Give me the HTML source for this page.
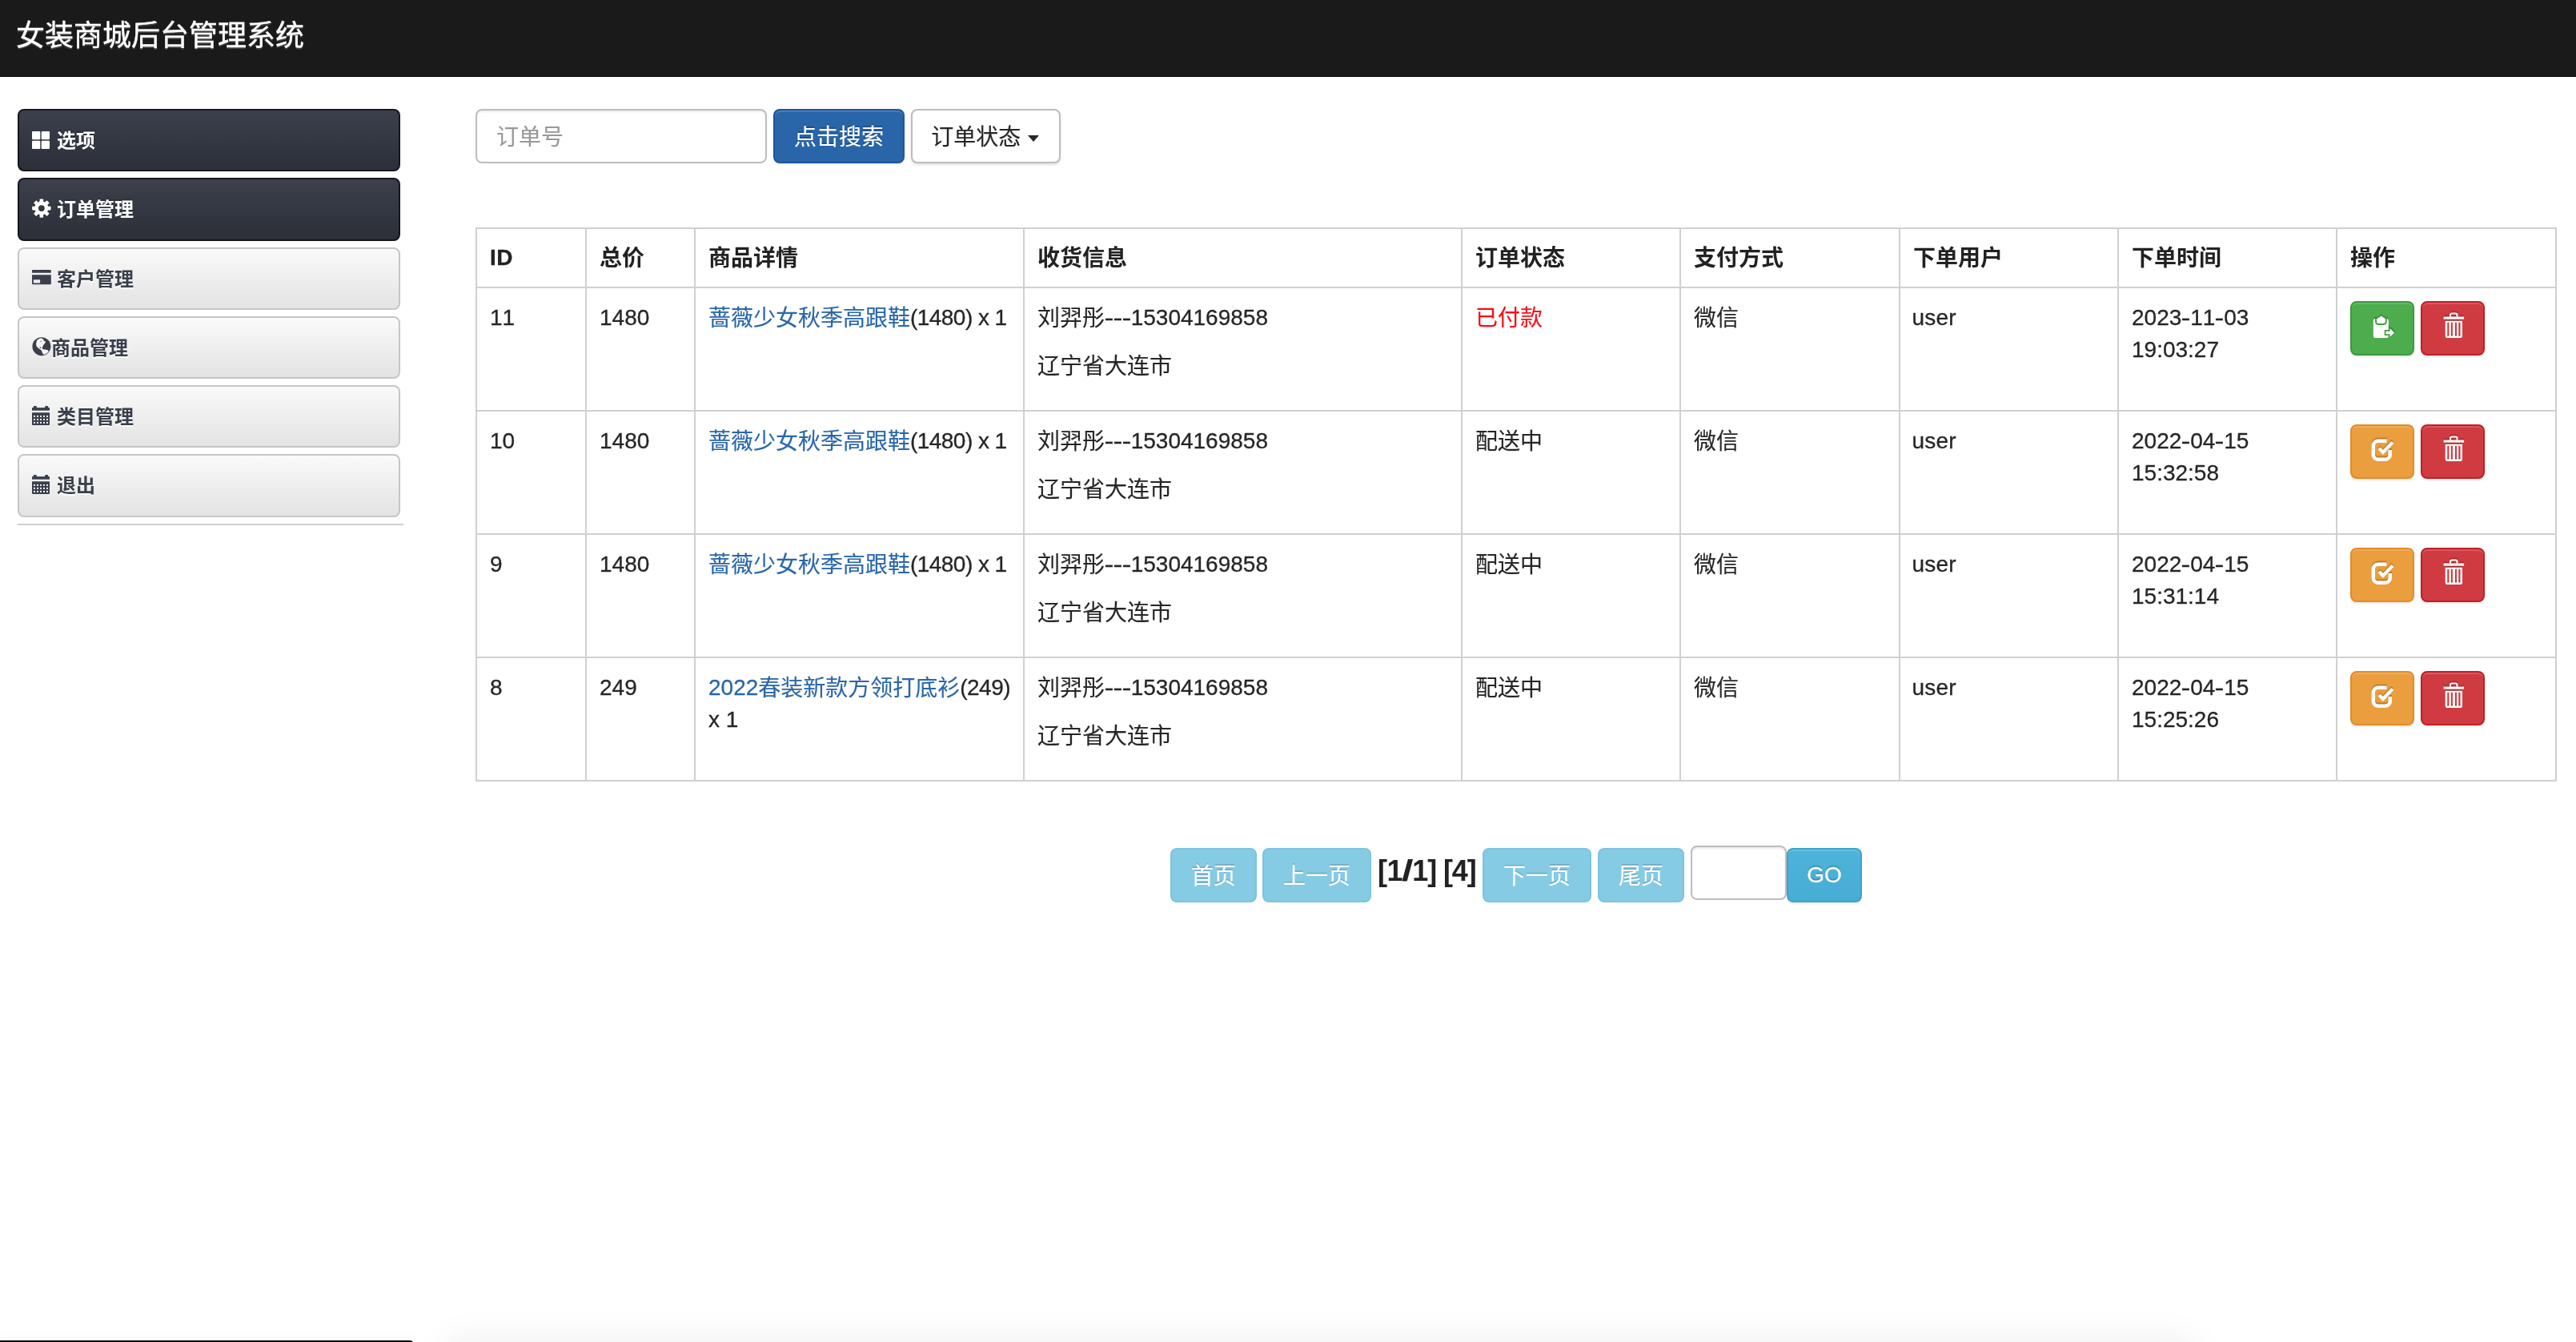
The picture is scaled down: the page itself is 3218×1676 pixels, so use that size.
<!DOCTYPE html>
<html lang="zh-CN">
<head>
<meta charset="utf-8">
<title>女装商城后台管理系统</title>
<style>
*{box-sizing:border-box;}
html,body{margin:0;padding:0;}
body{width:3218px;height:1676px;overflow:hidden;position:relative;background:#fff;
 font-family:"Liberation Sans","Noto Sans CJK SC",sans-serif;font-size:28px;line-height:40px;color:#262626;}
#w{position:absolute;left:0;top:0;width:3218px;height:1676px;will-change:transform;}
a{color:#2a66aa;text-decoration:none;}
p{margin:0 0 20px 0;}
.c{position:relative;top:1px;-webkit-text-stroke:.14px;}
.cb{position:relative;top:1px;}
.h{display:inline-block;width:10.9px;text-align:center;transform:scaleX(1.27);}
.nb{white-space:nowrap;}
.id{-webkit-text-stroke:.3px;letter-spacing:.5px;}

/* navbar */
.nav{position:absolute;left:0;top:0;width:3218px;height:96px;background:#1a1a1a;border-bottom:1px solid #030303;}
.brand{position:absolute;left:20px;top:19px;font-size:36px;line-height:52px;color:#fff;white-space:nowrap;text-shadow:0 2px 1px rgba(255,255,255,.18);-webkit-text-stroke:.4px;}

/* sidebar */
.side{position:absolute;left:22px;top:136px;width:482px;}
.sb{position:relative;display:block;width:478px;margin:0 0 8px 0;padding:21px 16px 19px 47px;border:2px solid #c6c6c6;border-radius:8px;
 font-size:24px;font-weight:bold;line-height:34.28px;color:#3a3f4b;white-space:nowrap;
 background:linear-gradient(to bottom,#fafafa 0%,#e3e3e4 100%);text-shadow:0 2px 0 rgba(255,255,255,.9);}
.sb.dark{color:#fff;border-color:#15171c;background:linear-gradient(to bottom,#3b404c 0%,#2c2f38 100%);text-shadow:0 -2px 0 rgba(0,0,0,.18);}
.sb svg{position:absolute;left:16px;top:24px;}
.sb.nog{padding-left:40px;}
.side hr{margin:0;border:0;border-top:2px solid #d0d0d0;width:482px;height:0;}

/* search row */
.search{position:absolute;left:594px;top:136px;white-space:nowrap;font-size:0;}
.inp{display:inline-block;vertical-align:top;width:364px;height:68px;border:2px solid #bdbdbd;border-radius:8px;padding:14px 24px 10px 24px;
 font-size:28px;line-height:40px;color:#999;background:#fff;-webkit-text-stroke:.14px;box-shadow:inset 0 2px 2px rgba(0,0,0,.075);}
.btn{display:inline-block;vertical-align:top;height:68px;padding:14px 0 10px 0;border:2px solid transparent;border-radius:8px;font-size:28px;line-height:40px;white-space:nowrap;text-align:center;-webkit-text-stroke:.14px;}
.btn-primary{margin-left:8px;width:164px;color:#fff;background:#2965a9;border-color:#21569a;
 text-shadow:0 -2px 0 rgba(0,0,0,.2);box-shadow:inset 0 2px 0 rgba(255,255,255,.15),0 2px 2px rgba(0,0,0,.075);}
.btn-default{margin-left:8px;width:187px;padding-right:2px;color:#262626;background:#fff;border-color:#bdbdbd;text-shadow:0 2px 0 #fff;
 box-shadow:inset 0 2px 0 rgba(255,255,255,.15),0 2px 3px rgba(0,0,0,.12);}
.caret{display:inline-block;width:0;height:0;margin-left:8.5px;vertical-align:4px;border-top:8px solid #262626;border-left:7.5px solid transparent;border-right:7.5px solid transparent;}

/* table */
table{position:absolute;left:594px;top:284px;width:2600px;border-collapse:separate;border-spacing:0;table-layout:fixed;
 border-right:2px solid #d0d0d0;border-bottom:2px solid #d0d0d0;}
th,td{border-left:2px solid #d0d0d0;border-top:2px solid #d0d0d0;padding:16px;vertical-align:top;text-align:left;overflow:hidden;}
th{height:74px;font-weight:bold;color:#222;}
.cb{-webkit-text-stroke:0;}
td{height:154px;padding:17px 16px 15px 16px;-webkit-text-stroke:.3px;font-kerning:none;}
td.nw{white-space:nowrap;}
.lat{letter-spacing:-.55px;}
.red{color:#f60f17;}
.ab{display:inline-block;vertical-align:top;width:80px;height:68px;border:2px solid;border-radius:8px;margin-right:8px;position:relative;
 box-shadow:inset 0 2px 0 rgba(255,255,255,.16),0 2px 2px rgba(0,0,0,.09);}
.ab svg{position:absolute;left:24px;top:16px;filter:drop-shadow(0 -2px 0 rgba(0,0,0,.2));}
.g{background:#4dad4d;border-color:#3d9a3d;}
.o{background:#ea9e3e;border-color:#e38c27;}
.r{background:#cf3b41;border-color:#c01f26;}
td.act{font-size:0;white-space:nowrap;padding:16px;}

/* pager */
.pg{position:absolute;top:1059px;height:68px;border:2px solid #7cc4df;border-radius:8px;background:#86cbe4;color:#fff;font-size:28px;line-height:40px;padding:14px 0 10px 0;text-align:center;white-space:nowrap;
 text-shadow:0 -2px 0 rgba(0,0,0,.13);-webkit-text-stroke:.14px;}
.pgt{position:absolute;top:1054px;left:1721px;font-size:36px;line-height:68px;font-weight:bold;color:#222;white-space:nowrap;letter-spacing:-.6px;font-kerning:none;}
.sl{display:inline-block;transform:scaleX(1.45);margin:0 1.4px 0 1.6px;}
.pgi{position:absolute;left:2112px;top:1056px;width:120px;height:68px;border:2px solid #bdbdbd;border-radius:8px;background:#fff;box-shadow:inset 0 2px 2px rgba(0,0,0,.075);}
.pg.go{padding:12px 0;-webkit-text-stroke:.3px;background:linear-gradient(to bottom,#4db3d9 0%,#47add5 100%);border-color:#3aa3cf;text-shadow:0 -2px 0 rgba(0,0,0,.2);box-shadow:inset 0 2px 0 rgba(255,255,255,.15),0 2px 2px rgba(0,0,0,.075);}

/* bottom sliver */
.bshadow{position:absolute;left:560px;top:1680px;width:2180px;height:20px;border-radius:40px;box-shadow:0 0 44px 6px rgba(0,0,0,.075);}
.bbar{position:absolute;left:0;top:1674px;width:516px;height:4px;background:#0c0c0c;border-top-right-radius:5px;box-shadow:0 -1px 14px rgba(0,0,0,.10);}
.hy2{letter-spacing:2.2px;margin-left:.5px;}
.us{margin-left:-1.5px;letter-spacing:.2px;}
</style>
</head>
<body>
<div id="w">
<div class="nav"><div class="brand">女装商城后台管理系统</div></div>
<div class="side">
<div class="sb dark"><svg width="24" height="26" viewBox="0 0 24 26" style="overflow:visible"><g fill="#fff"><rect x="0" y="2" width="10.3" height="10.3" rx="1"/><rect x="11.7" y="2" width="10.3" height="10.3" rx="1"/><rect x="0" y="13.7" width="10.3" height="10.3" rx="1"/><rect x="11.7" y="13.7" width="10.3" height="10.3" rx="1"/></g></svg>选项</div>
<div class="sb dark"><svg width="24" height="26" viewBox="0 0 24 26" style="overflow:visible"><defs><mask id="gm"><rect x="-2" y="-2" width="28" height="30" fill="#fff"/><circle cx="11.85" cy="12.1" r="3.9" fill="#000"/></mask></defs><g fill="#fff" mask="url(#gm)"><circle cx="11.85" cy="12.1" r="8.5"/><rect x="9.55" y="0.4" width="4.6" height="6" rx="0.8" transform="rotate(0 11.85 12.1)"/><rect x="9.55" y="0.4" width="4.6" height="6" rx="0.8" transform="rotate(45 11.85 12.1)"/><rect x="9.55" y="0.4" width="4.6" height="6" rx="0.8" transform="rotate(90 11.85 12.1)"/><rect x="9.55" y="0.4" width="4.6" height="6" rx="0.8" transform="rotate(135 11.85 12.1)"/><rect x="9.55" y="0.4" width="4.6" height="6" rx="0.8" transform="rotate(180 11.85 12.1)"/><rect x="9.55" y="0.4" width="4.6" height="6" rx="0.8" transform="rotate(225 11.85 12.1)"/><rect x="9.55" y="0.4" width="4.6" height="6" rx="0.8" transform="rotate(270 11.85 12.1)"/><rect x="9.55" y="0.4" width="4.6" height="6" rx="0.8" transform="rotate(315 11.85 12.1)"/></g></svg>订单管理</div>
<div class="sb"><svg width="24" height="26" viewBox="0 0 24 26" style="overflow:visible"><path fill="#3a3f4b" fill-rule="evenodd" d="M1 2h21.8a1 1 0 0 1 1 1V5.700H0V3a1 1 0 0 1 1-1zM0 8.200h23.8v11.100a1 1 0 0 1-1 1H1a1 1 0 0 1-1-1zM1.8 14.300v4.100h8.3v-4.100z"/></svg>客户管理</div>
<div class="sb nog"><svg width="24" height="26" viewBox="0 0 24 26" style="overflow:visible"><circle cx="11.9" cy="11.7" r="11.5" fill="#3a3f4b"/><path fill="#f4f4f4" d="M6.5 3.6 C8 2.2 9.8 1.3 11.6 1.2 C12.6 2 14 2.6 15 3.4 L14.2 4.6 L16.6 5.2 L16.9 6.6 L15.6 8.2 L14.2 10 L13 12.6 L12.7 13.4 L13.4 15.2 C15.4 15.2 17.4 15.5 18.8 16 L20.8 16.9 C20.4 18.4 19.6 19.4 18.6 20 C17.4 21 16 21.8 14.7 22.1 L13 20 L12 16.9 L9.8 15.1 L8 14.1 L5.7 11.4 C5.2 10.2 5 9 5.2 7.8 C5.4 6.2 5.8 4.8 6.5 3.6 Z"/><path fill="#3a3f4b" d="M10.3 5.4l1.6-.6.3.8-1.7.5zM9.3 12.6l1.1-.5 1 1.6-.8.4z"/></svg>商品管理</div>
<div class="sb"><svg width="24" height="26" viewBox="0 0 24 26" style="overflow:visible"><g fill="#3a3f4b"><rect x="1.8" y="0.1" width="4" height="3" rx="0.8"/><rect x="16.2" y="0.1" width="4" height="3" rx="0.8"/><rect x="0" y="2.1" width="22" height="3.6"/><path d="M0 8.2h22v14.7a1 1 0 0 1-1 1H1a1 1 0 0 1-1-1z"/></g><g fill="#f1f1f1"><rect x="2" y="11.9" width="2" height="2"/><rect x="6" y="11.9" width="2" height="2"/><rect x="10" y="11.9" width="2" height="2"/><rect x="14" y="11.9" width="2" height="2"/><rect x="18" y="11.9" width="2" height="2"/><rect x="2" y="15.9" width="2" height="2"/><rect x="6" y="15.9" width="2" height="2"/><rect x="10" y="15.9" width="2" height="2"/><rect x="14" y="15.9" width="2" height="2"/><rect x="18" y="15.9" width="2" height="2"/><rect x="2" y="19.9" width="2" height="2"/><rect x="6" y="19.9" width="2" height="2"/><rect x="10" y="19.9" width="2" height="2"/><rect x="14" y="19.9" width="2" height="2"/><rect x="18" y="19.9" width="2" height="2"/></g></svg>类目管理</div>
<div class="sb"><svg width="24" height="26" viewBox="0 0 24 26" style="overflow:visible"><g fill="#3a3f4b"><rect x="1.8" y="0.1" width="4" height="3" rx="0.8"/><rect x="16.2" y="0.1" width="4" height="3" rx="0.8"/><rect x="0" y="2.1" width="22" height="3.6"/><path d="M0 8.2h22v14.7a1 1 0 0 1-1 1H1a1 1 0 0 1-1-1z"/></g><g fill="#f1f1f1"><rect x="2" y="11.9" width="2" height="2"/><rect x="6" y="11.9" width="2" height="2"/><rect x="10" y="11.9" width="2" height="2"/><rect x="14" y="11.9" width="2" height="2"/><rect x="18" y="11.9" width="2" height="2"/><rect x="2" y="15.9" width="2" height="2"/><rect x="6" y="15.9" width="2" height="2"/><rect x="10" y="15.9" width="2" height="2"/><rect x="14" y="15.9" width="2" height="2"/><rect x="18" y="15.9" width="2" height="2"/><rect x="2" y="19.9" width="2" height="2"/><rect x="6" y="19.9" width="2" height="2"/><rect x="10" y="19.9" width="2" height="2"/><rect x="14" y="19.9" width="2" height="2"/><rect x="18" y="19.9" width="2" height="2"/></g></svg>退出</div>
<hr>
</div>
<div class="search">
<span class="inp">订单号</span><span class="btn btn-primary">点击搜索</span><span class="btn btn-default">订单状态<i class="caret"></i></span>
</div>
<table>
<colgroup><col style="width:137px"><col style="width:136px"><col style="width:411px"><col style="width:547px"><col style="width:273px"><col style="width:274px"><col style="width:273px"><col style="width:273px"><col style="width:274px"></colgroup>
<thead><tr><th><span class="id">ID</span></th><th><span class="cb">总价</span></th><th><span class="cb">商品详情</span></th><th><span class="cb">收货信息</span></th><th><span class="cb">订单状态</span></th><th><span class="cb">支付方式</span></th><th><span class="cb">下单用户</span></th><th><span class="cb">下单时间</span></th><th><span class="cb">操作</span></th></tr></thead>
<tbody>
<tr><td>11</td><td>1480</td><td class="nw"><a><span class="c">蔷薇少女秋季高跟鞋</span></a><span class="lat">(1480) x 1</span></td><td><p><span class="c">刘羿彤</span><span class="nb"><span class="h">-</span><span class="h">-</span><span class="h">-</span></span>15304169858</p><p><span class="c">辽宁省大连市</span></p></td><td><span class="red c">已付款</span></td><td><span class="c">微信</span></td><td><span class="us">user</span></td><td><span class="nb">2023<span class="h">-</span>11<span class="h">-</span>03</span> 19:03:27</td><td class="act"><span class="ab g"><svg width="30" height="30" viewBox="0 0 30 30" style="overflow:visible"><path fill="#fff" d="M5 4h14.6a2.2 2.2 0 0 1 2.2 2.2V25.8a2.2 2.2 0 0 1-2.2 2.2H5a2.2 2.2 0 0 1-2.2-2.2V6.2A2.2 2.2 0 0 1 5 4z"/><path fill="none" stroke="#3d9a3d" stroke-width="1.8" d="M6 3.6v4.2a3.2 3.2 0 0 0 3.2 3.2h6.400a3.2 3.2 0 0 0 3.2-3.2v-4.200"/><path fill="#fff" d="M8.2 4.300a1.800 1.800 0 0 1 1.800-1.800h.5a2.300 2.300 0 0 1 4.500 0h.5a1.800 1.800 0 0 1 1.800 1.800v3.100a1.800 1.800 0 0 1-1.800 1.800h-5.500a1.800 1.800 0 0 1-1.800-1.800z"/><path fill="#3d9a3d" d="M16.700 17.900h5.500v-3.500l8.200 7.100-8.200 7.100v-3.600h-5.500z"/><path fill="#fff" d="M18.300 19.700h5.300v-3.500l5.500 5.300-5.500 5.300v-3.500h-5.300z"/></svg></span><span class="ab r"><svg width="30" height="30" viewBox="0 0 30 30" style="overflow:visible"><path fill="none" stroke="#fff" stroke-width="2" d="M11 1.500V-.8a1.700 1.700 0 0 1 1.700-1.700h5.100a1.700 1.700 0 0 1 1.700 1.700V1.500"/><rect x="2.600" y="1.500" width="25.500" height="3.100" fill="#fff"/><path fill="#fff" fill-rule="evenodd" d="M4.700 6.700H26V25.800a2.200 2.200 0 0 1-2.200 2.200H6.900a2.200 2.200 0 0 1-2.200-2.200zM7.300 8.800V25.600h2.100V8.800zM11.800 8.800V25.600h2.100V8.800zM16.900 8.800V25.600h2.100V8.800zM21.300 8.800V25.600h2.200V8.800z"/></svg></span></td></tr>
<tr><td>10</td><td>1480</td><td class="nw"><a><span class="c">蔷薇少女秋季高跟鞋</span></a><span class="lat">(1480) x 1</span></td><td><p><span class="c">刘羿彤</span><span class="nb"><span class="h">-</span><span class="h">-</span><span class="h">-</span></span>15304169858</p><p><span class="c">辽宁省大连市</span></p></td><td><span class="c">配送中</span></td><td><span class="c">微信</span></td><td><span class="us">user</span></td><td><span class="nb">2022<span class="h">-</span>04<span class="h">-</span>15</span> 15:32:58</td><td class="act"><span class="ab o"><svg width="30" height="30" viewBox="0 0 30 30" style="overflow:visible"><path fill="none" stroke="#fff" stroke-width="4.5" d="M19.500 2.750H8.750a6 6 0 0 0-6 6V19.750a6 6 0 0 0 6 6H17.750a6 6 0 0 0 6-6V14"/><path fill="none" stroke="#fff" stroke-width="4.200" stroke-linejoin="miter" d="M10.100 11.900l4.800 5L26.900 4.400"/></svg></span><span class="ab r"><svg width="30" height="30" viewBox="0 0 30 30" style="overflow:visible"><path fill="none" stroke="#fff" stroke-width="2" d="M11 1.500V-.8a1.700 1.700 0 0 1 1.700-1.700h5.100a1.700 1.700 0 0 1 1.700 1.700V1.500"/><rect x="2.600" y="1.500" width="25.500" height="3.100" fill="#fff"/><path fill="#fff" fill-rule="evenodd" d="M4.700 6.700H26V25.800a2.200 2.200 0 0 1-2.200 2.200H6.900a2.200 2.200 0 0 1-2.200-2.200zM7.300 8.800V25.600h2.100V8.800zM11.800 8.800V25.600h2.100V8.800zM16.900 8.800V25.600h2.100V8.800zM21.300 8.800V25.600h2.200V8.800z"/></svg></span></td></tr>
<tr><td>9</td><td>1480</td><td class="nw"><a><span class="c">蔷薇少女秋季高跟鞋</span></a><span class="lat">(1480) x 1</span></td><td><p><span class="c">刘羿彤</span><span class="nb"><span class="h">-</span><span class="h">-</span><span class="h">-</span></span>15304169858</p><p><span class="c">辽宁省大连市</span></p></td><td><span class="c">配送中</span></td><td><span class="c">微信</span></td><td><span class="us">user</span></td><td><span class="nb">2022<span class="h">-</span>04<span class="h">-</span>15</span> 15:31:14</td><td class="act"><span class="ab o"><svg width="30" height="30" viewBox="0 0 30 30" style="overflow:visible"><path fill="none" stroke="#fff" stroke-width="4.5" d="M19.500 2.750H8.750a6 6 0 0 0-6 6V19.750a6 6 0 0 0 6 6H17.750a6 6 0 0 0 6-6V14"/><path fill="none" stroke="#fff" stroke-width="4.200" stroke-linejoin="miter" d="M10.100 11.900l4.800 5L26.900 4.400"/></svg></span><span class="ab r"><svg width="30" height="30" viewBox="0 0 30 30" style="overflow:visible"><path fill="none" stroke="#fff" stroke-width="2" d="M11 1.500V-.8a1.700 1.700 0 0 1 1.700-1.700h5.100a1.700 1.700 0 0 1 1.700 1.700V1.500"/><rect x="2.600" y="1.500" width="25.500" height="3.100" fill="#fff"/><path fill="#fff" fill-rule="evenodd" d="M4.700 6.700H26V25.800a2.200 2.200 0 0 1-2.200 2.200H6.900a2.200 2.200 0 0 1-2.200-2.200zM7.300 8.800V25.600h2.100V8.800zM11.800 8.800V25.600h2.100V8.800zM16.900 8.800V25.600h2.100V8.800zM21.300 8.800V25.600h2.200V8.800z"/></svg></span></td></tr>
<tr><td>8</td><td>249</td><td class="nw"><a>2022<span class="c">春装新款方领打底衫</span></a><span class="lat">(249)</span><br>x 1</td><td><p><span class="c">刘羿彤</span><span class="nb"><span class="h">-</span><span class="h">-</span><span class="h">-</span></span>15304169858</p><p><span class="c">辽宁省大连市</span></p></td><td><span class="c">配送中</span></td><td><span class="c">微信</span></td><td><span class="us">user</span></td><td><span class="nb">2022<span class="h">-</span>04<span class="h">-</span>15</span> 15:25:26</td><td class="act"><span class="ab o"><svg width="30" height="30" viewBox="0 0 30 30" style="overflow:visible"><path fill="none" stroke="#fff" stroke-width="4.5" d="M19.500 2.750H8.750a6 6 0 0 0-6 6V19.750a6 6 0 0 0 6 6H17.750a6 6 0 0 0 6-6V14"/><path fill="none" stroke="#fff" stroke-width="4.200" stroke-linejoin="miter" d="M10.100 11.900l4.800 5L26.900 4.400"/></svg></span><span class="ab r"><svg width="30" height="30" viewBox="0 0 30 30" style="overflow:visible"><path fill="none" stroke="#fff" stroke-width="2" d="M11 1.500V-.8a1.700 1.700 0 0 1 1.700-1.700h5.100a1.700 1.700 0 0 1 1.700 1.700V1.500"/><rect x="2.600" y="1.500" width="25.500" height="3.100" fill="#fff"/><path fill="#fff" fill-rule="evenodd" d="M4.700 6.700H26V25.800a2.200 2.200 0 0 1-2.200 2.200H6.900a2.200 2.200 0 0 1-2.200-2.200zM7.300 8.800V25.600h2.100V8.800zM11.800 8.800V25.600h2.100V8.800zM16.900 8.800V25.600h2.100V8.800zM21.300 8.800V25.600h2.200V8.800z"/></svg></span></td></tr>
</tbody></table>
<span class="pg" style="left:1462px;width:108px">首页</span>
<span class="pg" style="left:1577px;width:136px">上一页</span>
<span class="pgt">[1<span class="sl">/</span>1<span style="margin-left:-.5px">]</span> <span style="margin-left:-1px">[</span><span style="margin-left:-.7px">4</span><span style="margin-left:-.3px">]</span></span>
<span class="pg" style="left:1852px;width:136px">下一页</span>
<span class="pg" style="left:1996px;width:108px">尾页</span>
<span class="pgi"></span>
<span class="pg go" style="left:2232px;width:94px">GO</span>
<div class="bshadow"></div>
<div class="bbar"></div>
</div>
</body>
</html>
